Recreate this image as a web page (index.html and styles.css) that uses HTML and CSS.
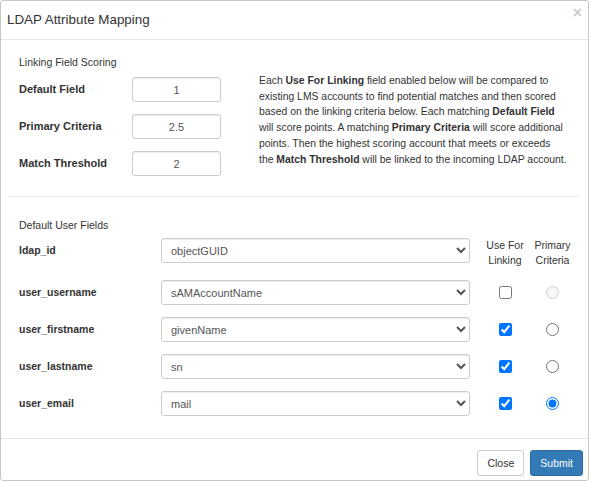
FILE: index.html
```html
<!DOCTYPE html>
<html lang="en">
<head>
  <meta charset="UTF-8">
  <title>LDAP Attribute Mapping</title>
  <link rel="stylesheet" href="styles.css">
</head>
<body>
  <div class="modal">
    <div class="modal-header">
      <h4 class="modal-title">LDAP Attribute Mapping</h4>
      <button class="close" type="button">&times;</button>
    </div>
    <div class="modal-body">
      <div class="scoring">
        <div class="scoring-fields">
          <div class="section-title">Linking Field Scoring</div>
          <div class="score-row score-row-first">
            <label>Default Field</label>
            <input class="score-input" type="text" value="1">
          </div>
          <div class="score-row">
            <label>Primary Criteria</label>
            <input class="score-input" type="text" value="2.5">
          </div>
          <div class="score-row">
            <label>Match Threshold</label>
            <input class="score-input" type="text" value="2">
          </div>
        </div>
        <p class="scoring-help">Each <b>Use For Linking</b> field enabled below will be compared to existing LMS accounts to find potential matches and then scored based on the linking criteria below. Each matching <b>Default Field</b> will score points. A matching <b>Primary Criteria</b> will score additional points. Then the highest scoring account that meets or exceeds the <b>Match Threshold</b> will be linked to the incoming LDAP account.</p>
      </div>

      <hr>

      <div class="fields">
        <div class="section-title">Default User Fields</div>
        <div class="field-row field-row-first">
          <label>ldap_id</label>
          <select class="field-select"><option>objectGUID</option></select>
          <div class="col-head">Use For Linking</div>
          <div class="col-head">Primary Criteria</div>
        </div>
        <div class="field-row">
          <label>user_username</label>
          <select class="field-select"><option>sAMAccountName</option></select>
          <div class="cell"><input type="checkbox"></div>
          <div class="cell"><input type="radio" name="primary" disabled></div>
        </div>
        <div class="field-row">
          <label>user_firstname</label>
          <select class="field-select"><option>givenName</option></select>
          <div class="cell"><input type="checkbox" checked></div>
          <div class="cell"><input type="radio" name="primary"></div>
        </div>
        <div class="field-row">
          <label>user_lastname</label>
          <select class="field-select"><option>sn</option></select>
          <div class="cell"><input type="checkbox" checked></div>
          <div class="cell"><input type="radio" name="primary"></div>
        </div>
        <div class="field-row">
          <label>user_email</label>
          <select class="field-select"><option>mail</option></select>
          <div class="cell"><input type="checkbox" checked></div>
          <div class="cell"><input type="radio" name="primary" checked></div>
        </div>
      </div>
    </div>
    <div class="modal-footer">
      <button class="btn btn-default" type="button">Close</button>
      <button class="btn btn-primary" type="button">Submit</button>
    </div>
  </div>
</body>
</html>
```

FILE: styles.css
```css
body {
  margin: 0;
  background: #fff;
  font-family: "Liberation Sans", Arial, Helvetica, sans-serif;
  font-size: 10.5px;
  line-height: 1.42857;
  color: #333;
}
.modal {
  width: 589px;
  height: 481px;
  box-sizing: border-box;
  border: 1px solid #c6c6c6;
  border-radius: 3px;
  background: #fff;
  overflow: hidden;
}
.modal-header {
  height: 38px;
  display: flex;
  justify-content: space-between;
  align-items: center;
  padding: 0 6px;
  border-bottom: 1px solid #e5e5e5;
}
.modal-title {
  margin: 0;
  font-size: 13.4px;
  font-weight: normal;
  line-height: 20px;
}
.close {
  align-self: flex-start;
  margin-top: 4px;
  padding: 0;
  border: 0;
  background: none;
  font-family: inherit;
  font-size: 16px;
  font-weight: bold;
  line-height: 1;
  color: #000;
  opacity: .2;
}
.modal-body {
  padding: 14px 7px 22px;
}
.section-title {
  line-height: 16px;
}
.scoring {
  display: flex;
  align-items: flex-start;
  padding: 0 11px;
}
.scoring-fields {
  width: 240px;
  flex: none;
}
.score-row {
  display: flex;
  align-items: center;
  margin-top: 12px;
}
.score-row-first {
  margin-top: 7px;
}
.score-row label {
  width: 113px;
  font-size: 11px;
  font-weight: bold;
}
.score-input, .field-select {
  height: 25px;
  box-sizing: border-box;
  border: 1px solid #ccc;
  border-radius: 3px;
  background: #fff;
  font-family: inherit;
  font-size: 11px;
  color: #555;
  box-shadow: inset 0 1px 1px rgba(0,0,0,.075);
}
.score-input {
  width: 89px;
  padding: 0 6px;
  text-align: center;
}
.scoring-help {
  width: 308px;
  margin: 19px 0 16px;
  font-size: 10.4px;
  line-height: 15.7px;
}
hr {
  margin: 13px 0 20px;
  border: 0;
  border-top: 1px solid #eee;
}
.fields {
  padding: 0 11px;
}
.field-row {
  display: grid;
  grid-template-columns: 142px 309px 10px 50px 45px;
  align-items: start;
  margin-top: 12px;
}
.field-row-first {
  margin-top: 5px;
}
.field-row label {
  line-height: 25px;
  font-weight: bold;
}
.field-select {
  width: 309px;
  padding: 0 5px;
}
.col-head, .cell {
  text-align: center;
}
.col-head {
  line-height: 15px;
}
.field-row .col-head:nth-of-type(1), .field-row .cell:nth-of-type(1) {
  grid-column: 4;
}
.cell {
  height: 25px;
  display: flex;
  justify-content: center;
  align-items: center;
}
.cell input {
  margin: 0;
  width: 13px;
  height: 13px;
}
.modal-footer {
  display: flex;
  justify-content: flex-end;
  gap: 6px;
  padding: 11px 5px;
  border-top: 1px solid #e5e5e5;
}
.btn {
  height: 26px;
  padding: 0 9px;
  border: 1px solid #ccc;
  border-radius: 3px;
  font-family: inherit;
  font-size: 10.5px;
}
.btn-default {
  background: #fff;
  color: #333;
}
.btn-primary {
  background: #337ab7;
  border-color: #2e6da4;
  color: #fff;
}
```
